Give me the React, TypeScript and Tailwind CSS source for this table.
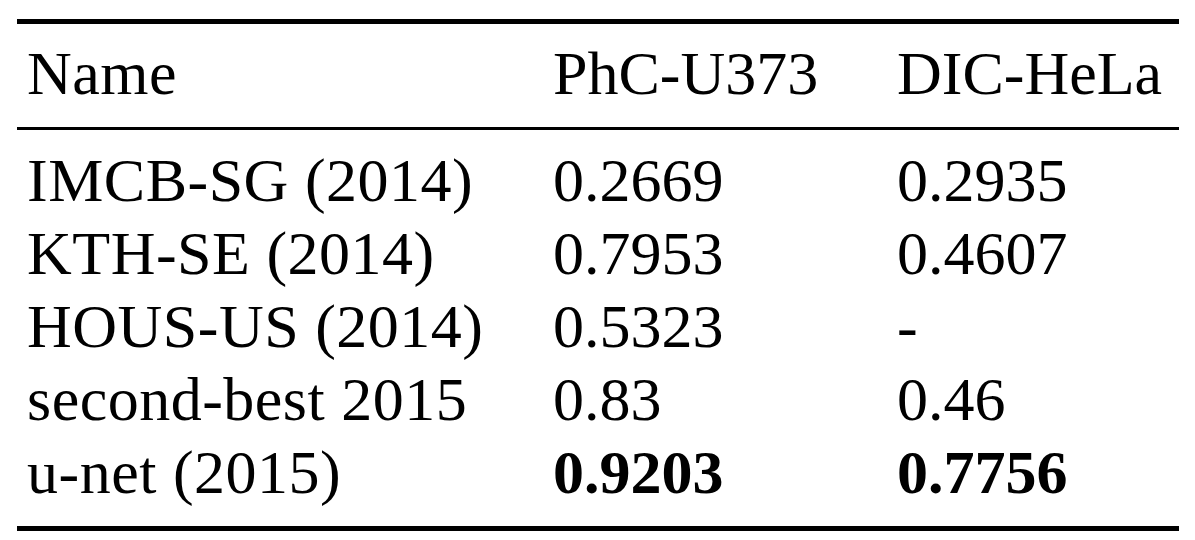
const rows = [
  { name: 'IMCB-SG (2014)', phc: '0.2669', dic: '0.2935' },
  { name: 'KTH-SE (2014)', phc: '0.7953', dic: '0.4607' },
  { name: 'HOUS-US (2014)', phc: '0.5323', dic: '-' },
  { name: 'second-best 2015', phc: '0.83', dic: '0.46' },
  { name: 'u-net (2015)', phc: '0.9203', dic: '0.7756', best: true },
];

function Row({ cells, bold }: { cells: string[]; bold?: boolean }) {
  return (
    <div className="grid grid-cols-[526px_344px_1fr] pl-[10px] h-[72px] leading-[72px] whitespace-nowrap">
      <span className="tracking-[0.5px]">{cells[0]}</span>
      <span className={bold ? 'font-bold' : ''}>{cells[1]}</span>
      <span className={bold ? 'font-bold' : ''}>{cells[2]}</span>
    </div>
  );
}

export default function App() {
  return (
    <div className="w-[1195px] h-[540px] bg-white overflow-hidden pt-[19px] pl-[17px] font-['Liberation_Serif',serif] text-[62px] text-black">
      <div className="w-[1162px] flex flex-col">
        {/* top rule */}
        <div className="h-[5px] bg-black" />
        <div className="pt-[13px] pb-[18px]">
          <Row cells={['Name', 'PhC-U373', 'DIC-HeLa']} />
        </div>
        {/* mid rule */}
        <div className="h-[3px] bg-black" />
        <div className="pt-[14px] pb-[18px] flex flex-col gap-[1px]">
          {rows.map((r) => (
            <Row key={r.name} cells={[r.name, r.phc, r.dic]} bold={r.best} />
          ))}
        </div>
        {/* bottom rule */}
        <div className="h-[5px] bg-black" />
      </div>
    </div>
  );
}
